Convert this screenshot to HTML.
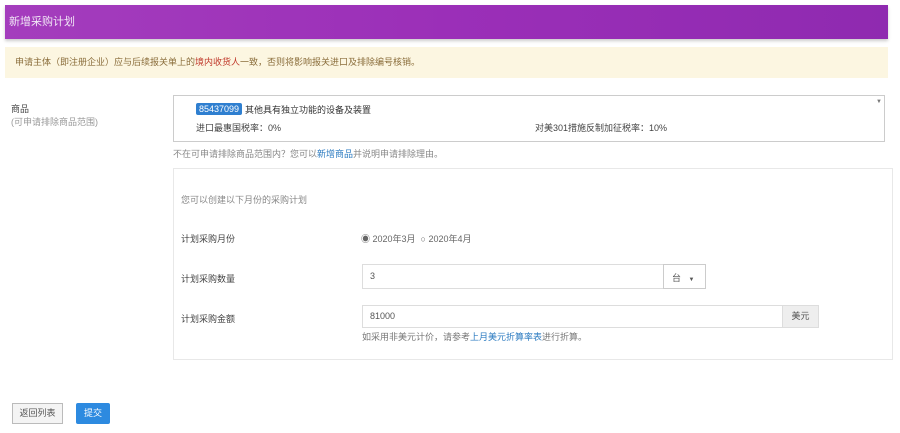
<!DOCTYPE html>
<html><head><meta charset="utf-8"><style>
body{margin:0;width:900px;height:433px;background:#fff;font-family:"Liberation Sans","Noto Sans CJK SC",sans-serif;font-size:9px;color:#555;position:relative;overflow:hidden}
.a{position:absolute}
</style></head><body>
<div class="a" style="left:5px;top:5px;width:883px;height:34px;background:linear-gradient(90deg,#a43dbd,#9b2fb8 50%,#8f2ab0);color:#f0e6f5;font-size:11px;line-height:34px;padding-left:4px;box-sizing:border-box;box-shadow:0 2px 3px #ccc">新增采购计划</div>
<div class="a" style="left:5px;top:47px;width:883px;height:31px;background:#fcf6e1;color:#8a6d3b;line-height:31px;padding-left:10px;box-sizing:border-box">申请主体（即注册企业）应与后续报关单上的<span style="color:#c0392b">境内收货人</span>一致，否则将影响报关进口及排除编号核销。</div>
<div class="a" style="left:11px;top:102px;color:#444">商品</div>
<div class="a" style="left:11px;top:115px;color:#999">(可申请排除商品范围)</div>
<div class="a" style="left:173px;top:95px;width:712px;height:47px;border:1px solid #ccc;box-sizing:border-box"></div>
<div class="a" style="left:196px;top:103px;background:#2f7fd0;color:#fff;padding:0 3px;height:12px;line-height:12px;border-radius:2px">85437099</div>
<div class="a" style="left:245px;top:103px;color:#333">其他具有独立功能的设备及装置</div>
<div class="a" style="left:196px;top:121px;color:#444">进口最惠国税率：0%</div>
<div class="a" style="left:535px;top:121px;color:#444">对美301措施反制加征税率：10%</div>
<div class="a" style="left:876px;top:99px;font-size:6px;color:#777">▼</div>
<div class="a" style="left:173px;top:147px;color:#888">不在可申请排除商品范围内？您可以<span style="color:#2a7ac0">新增商品</span>并说明申请排除理由。</div>
<div class="a" style="left:173px;top:168px;width:720px;height:192px;border:1px solid #e8e8e8;box-sizing:border-box"></div>
<div class="a" style="left:181px;top:193px;color:#888">您可以创建以下月份的采购计划</div>
<div class="a" style="left:181px;top:232px;color:#444">计划采购月份</div>
<div class="a" style="left:361px;top:232px;color:#666">◉ 2020年3月 &nbsp;○ 2020年4月</div>
<div class="a" style="left:181px;top:272px;color:#444">计划采购数量</div>
<div class="a" style="left:362px;top:264px;width:344px;height:25px;border:1px solid #ddd;box-sizing:border-box"></div>
<div class="a" style="left:663px;top:264px;width:43px;height:25px;border-left:1px solid #ddd;border:1px solid #ccc;box-sizing:border-box"></div>
<div class="a" style="left:370px;top:271px;color:#555">3</div>
<div class="a" style="left:672px;top:271px;color:#555">台 &nbsp;&nbsp;<span style="font-size:6px">▼</span></div>
<div class="a" style="left:181px;top:312px;color:#444">计划采购金额</div>
<div class="a" style="left:362px;top:305px;width:457px;height:23px;border:1px solid #ddd;box-sizing:border-box"></div>
<div class="a" style="left:782px;top:305px;width:37px;height:23px;background:#eee;border:1px solid #ddd;box-sizing:border-box;line-height:21px;text-align:center">美元</div>
<div class="a" style="left:370px;top:311px;color:#555">81000</div>
<div class="a" style="left:362px;top:330px;color:#777">如采用非美元计价，请参考<span style="color:#2a7ac0">上月美元折算率表</span>进行折算。</div>
<div class="a" style="left:12px;top:403px;width:51px;height:21px;border:1px solid #bbb;background:#f4f4f4;box-sizing:border-box;line-height:19px;text-align:center;color:#555">返回列表</div>
<div class="a" style="left:76px;top:403px;width:34px;height:21px;background:#2d8ae0;color:#fff;line-height:21px;text-align:center;border-radius:2px">提交</div>
</body></html>
